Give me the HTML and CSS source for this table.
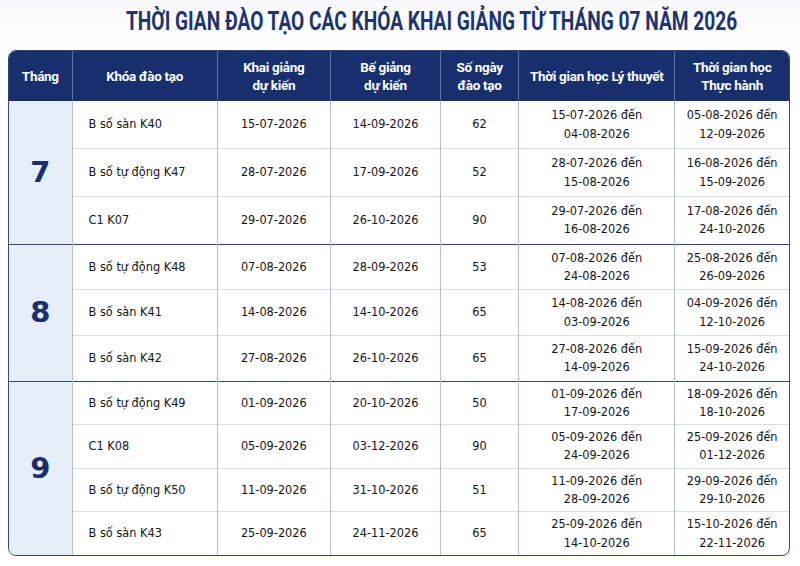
FILE: index.html
```html
<!DOCTYPE html>
<html lang="vi">
<head>
<meta charset="utf-8">
<title>Thời gian đào tạo</title>
<link rel="stylesheet" href="styles.css">
</head>
<body>
<div class="page">
  <h1 class="title"><span>THỜI GIAN ĐÀO TẠO CÁC KHÓA KHAI GIẢNG TỪ THÁNG 07 NĂM 2026</span></h1>
  <div class="table-wrap">
    <table class="schedule">
      <colgroup>
        <col class="c-month"><col class="c-course"><col class="c-open"><col class="c-close"><col class="c-days"><col class="c-theory"><col class="c-practice">
      </colgroup>
      <thead>
        <tr>
          <th>Tháng</th>
          <th>Khóa đào tạo</th>
          <th>Khai giảng<br>dự kiến</th>
          <th>Bế giảng<br>dự kiến</th>
          <th>Số ngày<br>đào tạo</th>
          <th>Thời gian học Lý thuyết</th>
          <th>Thời gian học<br>Thực hành</th>
        </tr>
      </thead>
      <tbody class="g7">
        <tr class="first">
          <td class="month" rowspan="3">7</td>
          <td class="course">B số sàn K40</td><td>15-07-2026</td><td>14-09-2026</td><td>62</td>
          <td>15-07-2026 đến<br>04-08-2026</td><td>05-08-2026 đến<br>12-09-2026</td>
        </tr>
        <tr>
          <td class="course">B số tự động K47</td><td>28-07-2026</td><td>17-09-2026</td><td>52</td>
          <td>28-07-2026 đến<br>15-08-2026</td><td>16-08-2026 đến<br>15-09-2026</td>
        </tr>
        <tr>
          <td class="course">C1 K07</td><td>29-07-2026</td><td>26-10-2026</td><td>90</td>
          <td>29-07-2026 đến<br>16-08-2026</td><td>17-08-2026 đến<br>24-10-2026</td>
        </tr>
      </tbody>
      <tbody class="g8">
        <tr class="first">
          <td class="month" rowspan="3">8</td>
          <td class="course">B số tự động K48</td><td>07-08-2026</td><td>28-09-2026</td><td>53</td>
          <td>07-08-2026 đến<br>24-08-2026</td><td>25-08-2026 đến<br>26-09-2026</td>
        </tr>
        <tr>
          <td class="course">B số sàn K41</td><td>14-08-2026</td><td>14-10-2026</td><td>65</td>
          <td>14-08-2026 đến<br>03-09-2026</td><td>04-09-2026 đến<br>12-10-2026</td>
        </tr>
        <tr>
          <td class="course">B số sàn K42</td><td>27-08-2026</td><td>26-10-2026</td><td>65</td>
          <td>27-08-2026 đến<br>14-09-2026</td><td>15-09-2026 đến<br>24-10-2026</td>
        </tr>
      </tbody>
      <tbody class="g9">
        <tr class="first">
          <td class="month" rowspan="4">9</td>
          <td class="course">B số tự động K49</td><td>01-09-2026</td><td>20-10-2026</td><td>50</td>
          <td>01-09-2026 đến<br>17-09-2026</td><td>18-09-2026 đến<br>18-10-2026</td>
        </tr>
        <tr>
          <td class="course">C1 K08</td><td>05-09-2026</td><td>03-12-2026</td><td>90</td>
          <td>05-09-2026 đến<br>24-09-2026</td><td>25-09-2026 đến<br>01-12-2026</td>
        </tr>
        <tr>
          <td class="course">B số tự động K50</td><td>11-09-2026</td><td>31-10-2026</td><td>51</td>
          <td>11-09-2026 đến<br>28-09-2026</td><td>29-09-2026 đến<br>29-10-2026</td>
        </tr>
        <tr>
          <td class="course">B số sàn K43</td><td>25-09-2026</td><td>24-11-2026</td><td>65</td>
          <td>25-09-2026 đến<br>14-10-2026</td><td>15-10-2026 đến<br>22-11-2026</td>
        </tr>
      </tbody>
    </table>
  </div>
</div>
</body>
</html>
```

FILE: styles.css
```css
* { box-sizing: border-box; }
html, body { margin: 0; padding: 0; background: #ffffff; }
.page {
  width: 800px;
  height: 566px;
  padding: 0 10px 0 8px;
  overflow: hidden;
  background: linear-gradient(180deg, #f8f8fa 0, #ffffff 45px);
}
.title {
  margin: 0;
  height: 50px;
  padding: 6px 0 0 66px;
  display: flex;
  justify-content: center;
  align-items: flex-start;
  font-family: "Roboto", "Liberation Sans", sans-serif;
  font-weight: 700;
  font-size: 25.5px;
  line-height: 30px;
  color: #1d3470;
  white-space: nowrap;
}
.title span {
  display: inline-block;
  flex: none;
  transform: scaleX(0.75);
  transform-origin: center;
}
.table-wrap {
  width: 782px;
  border: 1.5px solid #34467a;
  border-radius: 8px;
  overflow: hidden;
}
.schedule {
  width: 100%;
  border-collapse: collapse;
  table-layout: fixed;
  font-family: "DejaVu Sans Condensed", "DejaVu Sans", sans-serif;
  font-size: 12.6px;
  color: #141414;
}
.c-month { width: 63px; }
.c-course { width: 145px; }
.c-open { width: 113px; }
.c-close { width: 110px; }
.c-days { width: 78px; }
.c-theory { width: 156px; }
.c-practice { width: 114px; }
.schedule th {
  height: 50px;
  background: #17306d;
  color: #ffffff;
  font-family: "Roboto", "Liberation Sans", sans-serif;
  font-weight: 700;
  font-size: 13.5px;
  letter-spacing: -0.3px;
  line-height: 18px;
  text-align: center;
  vertical-align: middle;
  padding: 0 4px;
  border-left: 1px solid #5a74a8;
}
.schedule th:first-child { border-left: none; }
.schedule td {
  text-align: center;
  vertical-align: middle;
  line-height: 18.3px;
  padding: 0 4px;
  border-left: 1px solid #b5bdd2;
  border-top: 1px solid #d9dde6;
}
.schedule td.course { text-align: left; padding-left: 16px; }
.schedule td.month {
  border-left: none;
  background: #e6eefa;
  font-family: "DejaVu Sans", sans-serif;
  font-weight: 700;
  font-size: 29px;
  color: #1b2f6b;
  border-right: 1px solid #b5bdd2;
}
.schedule tbody tr.first td { border-top: 1.5px solid #34467a; }
.schedule thead + tbody tr.first td { border-top: none; }
.g7 tr { height: 47.7px; }
.g8 tr { height: 45.7px; }
.g9 tr { height: 43.5px; }
```
